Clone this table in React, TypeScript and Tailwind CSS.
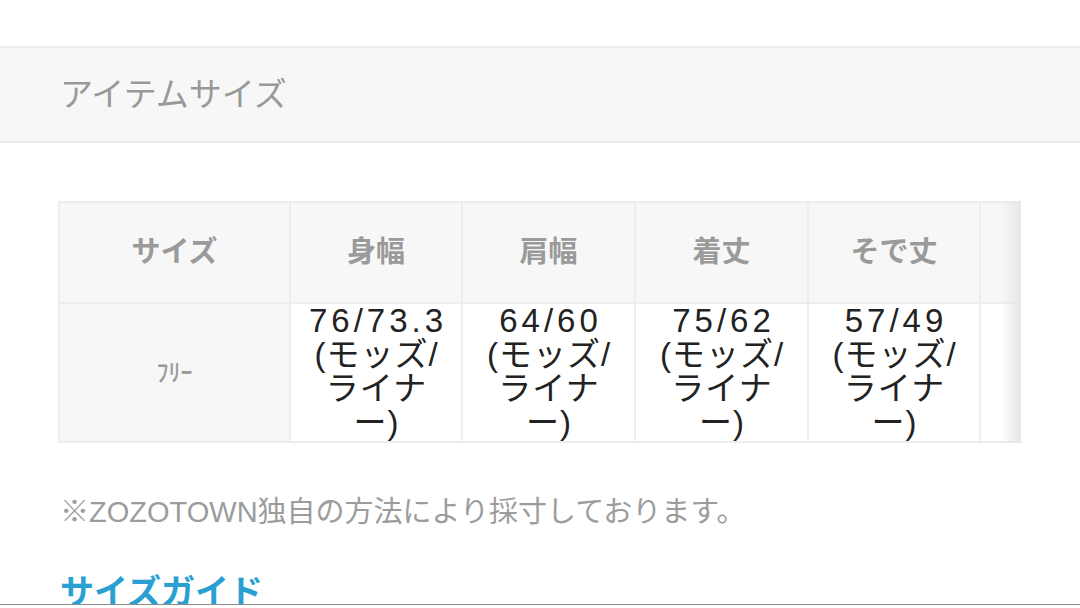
import React from "react";

type Column = { label: string; lines: string[] };

const columns: Column[] = [
  { label: "身幅", lines: ["76/73.3", "(モッズ/", "ライナ", "ー)"] },
  { label: "肩幅", lines: ["64/60", "(モッズ/", "ライナ", "ー)"] },
  { label: "着丈", lines: ["75/62", "(モッズ/", "ライナ", "ー)"] },
  { label: "そで丈", lines: ["57/49", "(モッズ/", "ライナ", "ー)"] },
  { label: "ゆき丈", lines: ["", "", "", ""] },
];

function ValueCell({ lines }: { lines: string[] }) {
  return (
    <div className="h-[137px] overflow-hidden bg-white text-[#222] text-center">
      {lines.map((line, i) => (
        <div
          key={i}
          className={i === 0 ? "h-[34px] leading-[34px] text-[33px] tracking-[4px] pl-[4px]" : "h-[34px] leading-[34px] text-[33px] tracking-[1px] pl-[1px]"}
        >
          {line}
        </div>
      ))}
    </div>
  );
}

export default function App() {
  return (
    <div className="relative w-[1080px] h-[608px] overflow-hidden bg-white font-['Liberation_Sans','Noto_Sans_CJK_JP',sans-serif]">
      <div className="mt-[46px] h-[97px] border-y-2 border-[#ececec] bg-[#f7f7f7] flex items-center pl-[60px]">
        <h2 className="text-[33px] text-[#999] font-normal">アイテムサイズ</h2>
      </div>

      <div className="relative mt-[58px] ml-[58px] w-[963px] overflow-hidden">
        <div className="grid w-max grid-cols-[229px_170px_171px_171px_170px_160px] gap-[2px] p-[2px] bg-[#ededed]">
          <div className="h-[99px] bg-[#f7f7f7] flex items-center justify-center text-[29px] font-bold text-[#9a9a9a]">
            サイズ
          </div>
          {columns.map(({ label }) => (
            <div key={label} className="h-[99px] bg-[#f7f7f7] flex items-center justify-center text-[29px] font-bold text-[#9a9a9a]">
              {label}
            </div>
          ))}
          <div className="h-[137px] bg-[#f7f7f7] flex items-center justify-center text-[24px] font-medium text-[#999]">
            ﾌﾘｰ
          </div>
          {columns.map(({ label, lines }) => (
            <ValueCell key={label} lines={lines} />
          ))}
        </div>
        {/* scroll hint shadow */}
        <div className="absolute right-0 top-0 bottom-0 w-[20px] bg-gradient-to-r from-transparent to-[#e6e6e6]" />
      </div>

      <p className="mt-[48px] ml-[60px] text-[29px] text-[#9c9c9c]">※ZOZOTOWN独自の方法により採寸しております。</p>

      <a className="block mt-[40px] ml-[60px] text-[34px] font-bold text-[#2a9fd2] leading-none">サイズガイド</a>

      <div className="absolute left-0 right-0 bottom-0 h-[4px] border-t border-[#8a8a8a] bg-white" />
    </div>
  );
}
